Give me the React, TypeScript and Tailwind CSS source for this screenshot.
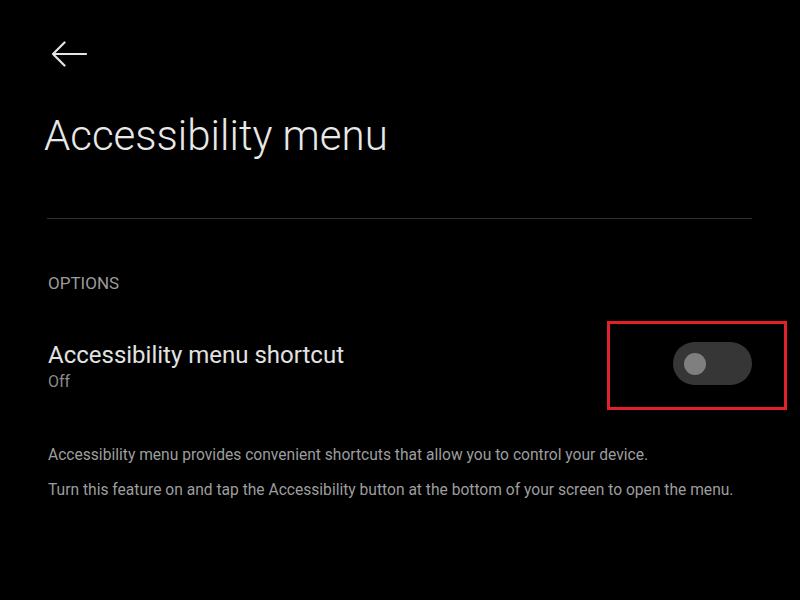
const BackArrow = () => (
  <svg width="36" height="26" viewBox="0 0 36 26" fill="none" className="ml-[3px] text-[#e4e4e4]">
    <path
      d="M35 13H2M13.5 1.5L2 13l11.5 11.5"
      stroke="currentColor"
      strokeWidth="2.2"
      strokeLinecap="round"
      strokeLinejoin="round"
    />
  </svg>
);

const Toggle = () => (
  <div className="relative mt-[1px]">
    <div className="flex h-[43px] w-[79px] items-center rounded-full bg-[#363636] px-[11px]">
      <div className="size-[22px] rounded-full bg-[#7f7f7f]" />
    </div>
    {/* red highlight box */}
    <div className="pointer-events-none absolute -left-[66px] -top-[21px] h-[89px] w-[180px] border-[3px] border-[#e3212b]" />
  </div>
);

export default function App() {
  return (
    <div
      className="h-[600px] w-[800px] overflow-hidden bg-black"
      style={{ fontFamily: "Roboto, 'Noto Sans', sans-serif" }}
    >
      <div className="px-[48px]">
        <div className="flex items-start pt-[41px]">
          <BackArrow />
        </div>
        <h1 className="-ml-[4px] mt-[45px] text-[42px] font-light leading-[48px] text-[#e8e8e8]">
          Accessibility menu
        </h1>
        <div className="mt-[58px] h-px w-[705px] -ml-px bg-[#2e2e2e]" />
        <div className="mt-[54px] text-[17px] leading-[20px] text-[#9b9b9b]">OPTIONS</div>
        <div className="mt-[48px] flex items-start justify-between">
          <div>
            <div className="text-[24px] leading-[28px] text-[#e2e2e2]">Accessibility menu shortcut</div>
            <div className="mt-[2px] text-[16px] leading-[22px] text-[#8c8c8c]">Off</div>
          </div>
          <Toggle />
        </div>
        <div className="mt-[52px] space-y-[15px] text-[15.6px] leading-[20px] text-[#9d9d9d]">
          <p>Accessibility menu provides convenient shortcuts that allow you to control your device.</p>
          <p>Turn this feature on and tap the Accessibility button at the bottom of your screen to open the menu.</p>
        </div>
      </div>
    </div>
  );
}
